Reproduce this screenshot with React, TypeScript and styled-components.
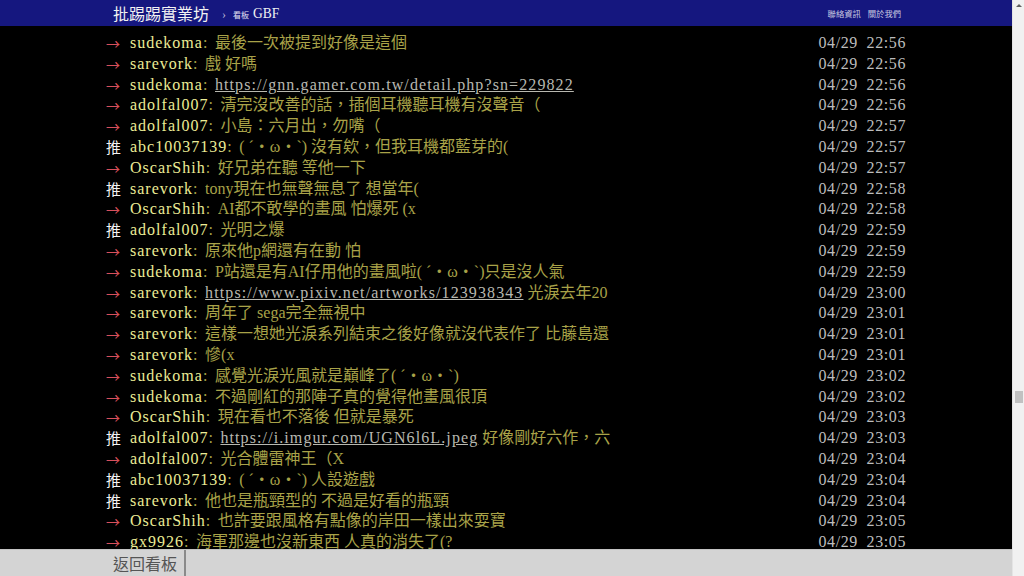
import React from "react";
import styled, { createGlobalStyle } from "styled-components";

const Global = createGlobalStyle`
  html, body { margin: 0; padding: 0; background: #000; overflow: hidden; }
  #root { height: 576px; }
`;

const Page = styled.div`
  display: flex;
  height: 576px;
  width: 1024px;
`;

const Viewport = styled.div`
  flex: 1;
  display: flex;
  flex-direction: column;
  min-width: 0;
  background: #000;
`;

const TopBar = styled.header`
  height: 26px;
  flex: none;
  background: #15177f;
  color: #fff;
`;

const Bar = styled.div`
  width: 800px;
  margin: 0 auto;
  height: 100%;
  display: flex;
  align-items: center;
  box-sizing: border-box;
  padding: 0 5px 0 7px;
`;

const Logo = styled.span`
  font-family: "Noto Sans CJK TC", sans-serif;
  font-size: 16px;
  color: #f2f2f2;
  line-height: 26px;
`;

const Crumb = styled.span`
  font-family: "Liberation Serif", serif;
  font-size: 12px;
  color: #b8b8d8;
  margin: 2px 7px 0 13px;
`;

const BoardLabel = styled.span`
  font-family: "Noto Sans CJK TC", sans-serif;
  font-size: 8px;
  color: #e0e0f0;
  margin-right: 4px;
  margin-top: 2px;
`;

const BoardName = styled.span`
  font-family: "Liberation Serif", serif;
  font-size: 15px;
  color: #f2f2f2;
  transform: scaleX(0.9);
  transform-origin: left center;
`;

const Links = styled.nav`
  margin-left: auto;
  display: flex;
  gap: 7px;
`;

const TopLink = styled.a`
  font-family: "Noto Sans CJK TC", sans-serif;
  font-size: 8.3px;
  color: #c8c8e0;
  text-decoration: none;
`;

const Main = styled.main`
  flex: 1;
  overflow: hidden;
  padding-top: 6.6px;
`;

const Screen = styled.div`
  width: 800px;
  margin: 0 auto;
  font-family: "Liberation Serif", "Noto Sans CJK TC", serif;
  font-size: 16px;
`;

const Push = styled.div`
  display: flex;
  align-items: center;
  height: 20.8px;
  line-height: 20px;
  white-space: nowrap;
  overflow: hidden;
`;

const PushTag = styled.span<{ $push: boolean }>`
  flex: none;
  width: 24px;
  font-family: "Noto Sans CJK TC", sans-serif;
  color: ${(p) => (p.$push ? "#f4f4f4" : "#d8505c")};
  font-size: ${(p) => (p.$push ? "15px" : "14px")};
  line-height: 20px;
`;

const UserId = styled.span`
  flex: none;
  color: #ecec96;
  letter-spacing: 1px;
`;

const Colon = styled.span`
  flex: none;
  color: #a8a44a;
  width: 12px;
`;

const Content = styled.span`
  flex: 1;
  min-width: 0;
  overflow: hidden;
  color: #a8a248;
`;

const Url = styled.a`
  color: #b8b8b0;
  text-decoration: underline;
  letter-spacing: 1.1px;
`;

const Time = styled.span`
  flex: none;
  color: #bdbdbd;
  word-spacing: 4px;
  letter-spacing: 0.6px;
`;

const BottomBar = styled.footer`
  height: 27px;
  flex: none;
  background: #d4d4d4;
  border-top: 1px solid #c4c4c4;
  box-sizing: border-box;
`;

const BottomInner = styled.div`
  width: 800px;
  margin: 0 auto;
  height: 100%;
  display: flex;
`;

const BackButton = styled.a`
  display: flex;
  align-items: center;
  padding: 0 7px;
  width: 80px;
  box-sizing: border-box;
  border-right: 2px solid #8a8a8a;
  font-family: "Noto Sans CJK TC", sans-serif;
  font-size: 16px;
  color: #555;
  text-decoration: none;
`;

const Scrollbar = styled.div`
  width: 12px;
  flex: none;
  background: #f1f1f1;
  border-left: 1px solid #e4e4e4;
  box-sizing: border-box;
  display: flex;
  flex-direction: column;
  align-items: center;
`;

const Arrow = styled.div<{ $down?: boolean }>`
  width: 0;
  height: 0;
  margin: 4px 0;
  border-left: 3px solid transparent;
  border-right: 3px solid transparent;
  ${(p) => (p.$down ? "border-top: 3px solid #606060;" : "border-bottom: 3px solid #606060;")}
`;

const Track = styled.div`
  flex: 1;
  width: 100%;
  display: flex;
  flex-direction: column;
  align-items: center;
  padding-top: 380px;
`;

const Thumb = styled.div`
  width: 8px;
  height: 12px;
  background: #c1c1c1;
`;

type Part = string | { url: string };
type Row = { tag: "push" | "arrow"; user: string; content: Part[]; time: string };

const rows: Row[] = [
  { tag: "arrow", user: "sudekoma", content: ["最後一次被提到好像是這個"], time: "22:56" },
  { tag: "arrow", user: "sarevork", content: ["戲 好嗎"], time: "22:56" },
  { tag: "arrow", user: "sudekoma", content: [{ url: "https://gnn.gamer.com.tw/detail.php?sn=229822" }], time: "22:56" },
  { tag: "arrow", user: "adolfal007", content: ["清完沒改善的話，插個耳機聽耳機有沒聲音（"], time: "22:56" },
  { tag: "arrow", user: "adolfal007", content: ["小島：六月出，勿嘴（"], time: "22:57" },
  { tag: "push", user: "abc10037139", content: ["( ´・ω・`) 沒有欸，但我耳機都藍芽的("], time: "22:57" },
  { tag: "arrow", user: "OscarShih", content: ["好兄弟在聽 等他一下"], time: "22:57" },
  { tag: "push", user: "sarevork", content: ["tony現在也無聲無息了 想當年("], time: "22:58" },
  { tag: "arrow", user: "OscarShih", content: ["AI都不敢學的畫風 怕爆死 (x"], time: "22:58" },
  { tag: "push", user: "adolfal007", content: ["光明之爆"], time: "22:59" },
  { tag: "arrow", user: "sarevork", content: ["原來他p網還有在動 怕"], time: "22:59" },
  { tag: "arrow", user: "sudekoma", content: ["P站還是有AI仔用他的畫風啦( ´・ω・`)只是沒人氣"], time: "22:59" },
  { tag: "arrow", user: "sarevork", content: [{ url: "https://www.pixiv.net/artworks/123938343" }, " 光淚去年20"], time: "23:00" },
  { tag: "arrow", user: "sarevork", content: ["周年了 sega完全無視中"], time: "23:01" },
  { tag: "arrow", user: "sarevork", content: ["這樣一想她光淚系列結束之後好像就沒代表作了 比藤島還"], time: "23:01" },
  { tag: "arrow", user: "sarevork", content: ["慘(x"], time: "23:01" },
  { tag: "arrow", user: "sudekoma", content: ["感覺光淚光風就是巔峰了( ´・ω・`)"], time: "23:02" },
  { tag: "arrow", user: "sudekoma", content: ["不過剛紅的那陣子真的覺得他畫風很頂"], time: "23:02" },
  { tag: "arrow", user: "OscarShih", content: ["現在看也不落後 但就是暴死"], time: "23:03" },
  { tag: "push", user: "adolfal007", content: [{ url: "https://i.imgur.com/UGN6l6L.jpeg" }, " 好像剛好六作，六"], time: "23:03" },
  { tag: "arrow", user: "adolfal007", content: ["光合體雷神王（X"], time: "23:04" },
  { tag: "push", user: "abc10037139", content: ["( ´・ω・`) 人設遊戲"], time: "23:04" },
  { tag: "push", user: "sarevork", content: ["他也是瓶頸型的 不過是好看的瓶頸"], time: "23:04" },
  { tag: "arrow", user: "OscarShih", content: ["也許要跟風格有點像的岸田一樣出來耍寶"], time: "23:05" },
  { tag: "arrow", user: "gx9926", content: ["海軍那邊也沒新東西 人真的消失了(?"], time: "23:05" },
];

export default function App() {
  return (
    <Page>
      <Global />
      <Viewport>
        <TopBar>
          <Bar>
            <Logo>批踢踢實業坊</Logo>
            <Crumb>›</Crumb>
            <BoardLabel>看板</BoardLabel>
            <BoardName>GBF</BoardName>
            <Links>
              <TopLink>聯絡資訊</TopLink>
              <TopLink>關於我們</TopLink>
            </Links>
          </Bar>
        </TopBar>
        <Main>
          <Screen>
            {rows.map((r, i) => (
              <Push key={i}>
                <PushTag $push={r.tag === "push"}>{r.tag === "push" ? "推" : "→"}</PushTag>
                <UserId>{r.user}</UserId>
                <Colon>:</Colon>
                <Content>
                  {r.content.map((c, j) =>
                    typeof c === "string" ? <span key={j}>{c}</span> : <Url key={j}>{c.url}</Url>
                  )}
                </Content>
                <Time>04/29 {r.time}</Time>
              </Push>
            ))}
          </Screen>
        </Main>
        <BottomBar>
          <BottomInner>
            <BackButton>返回看板</BackButton>
          </BottomInner>
        </BottomBar>
      </Viewport>
      <Scrollbar>
        <Arrow />
        <Track>
          <Thumb />
        </Track>
      </Scrollbar>
    </Page>
  );
}
